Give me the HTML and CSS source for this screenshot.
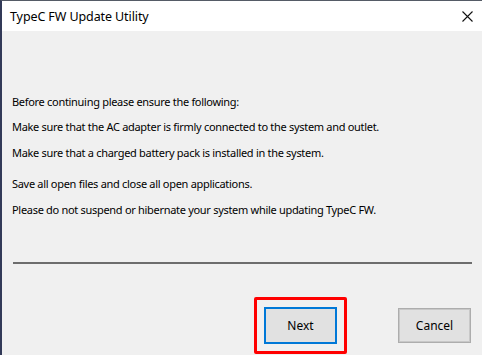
FILE: index.html
```html
<!DOCTYPE html>
<html>
<head>
    <title>TypeC FW Update Utility</title>
    <link rel="stylesheet" href="styles.css">
</head>
<body>
    <div class="window">
        <div class="titlebar">
            <span class="title">TypeC FW Update Utility</span>
            <svg class="close" width="11" height="11" viewBox="0 0 11 11">
                <path d="M0.5 0.5 L10.5 10.5 M10.5 0.5 L0.5 10.5" stroke="#111" stroke-width="1.1" fill="none"/>
            </svg>
        </div>

        <div class="content">
            <p class="intro">Before continuing please ensure the following:</p>
            <p>Make sure that the AC adapter is firmly connected to the system and outlet.</p>
            <p class="before-gap">Make sure that a charged battery pack is installed in the system.</p>
            <p>Save all open files and close all open applications.</p>
            <p class="last">Please do not suspend or hibernate your system while updating TypeC FW.</p>
        </div>

        <div class="separator"></div>

        <div class="footer">
            <div class="highlight">
                <button class="btn btn-default">Next</button>
            </div>
            <button class="btn btn-cancel">Cancel</button>
        </div>
    </div>
</body>
</html>
```

FILE: styles.css
```css
body { margin: 0; font-family: "Noto Sans", "Liberation Sans", sans-serif; color: #000; }
.window { width: 482px; height: 355px; box-sizing: border-box; background: #f0f0f0; border-top: 1px solid #555b66; border-left: 2px solid #323a58; display: flex; flex-direction: column; overflow: hidden; }
.titlebar { height: 30px; background: #fff; display: flex; align-items: center; justify-content: space-between; padding: 0 9px 0 8px; flex-shrink: 0; }
.title { font-size: 12.5px; letter-spacing: -0.1px; }
.close { margin-top: 1px; }
.content { padding: 63px 0 0 10px; font-size: 11px; letter-spacing: -0.3px; }
.content p { margin: 0; height: 16px; line-height: 16px; margin-bottom: 10px; }
.content p.intro { margin-bottom: 9px; }
.content p.before-gap { margin-bottom: 15px; }
.content p.last { margin-bottom: 0; }
.separator { height: 2px; background: #6d6d6d; margin: 44px 10px 0 11px; flex-shrink: 0; }
.footer { display: flex; justify-content: flex-end; align-items: center; padding: 33px 11px 0 0; gap: 51px; }
.highlight { border: 3px solid #ff0000; border-radius: 2px; padding: 7px; }
.btn { font-family: "Noto Sans", "Liberation Sans", sans-serif; font-size: 12px; color: #000; background: #e1e1e1; width: 73px; padding: 0; box-sizing: border-box; }
.btn-default { height: 37px; border: 2px solid #0078d7; }
.btn-cancel { height: 35px; border: 1px solid #adadad; box-shadow: inset 0 0 0 1px #c8c8c8; }
```
